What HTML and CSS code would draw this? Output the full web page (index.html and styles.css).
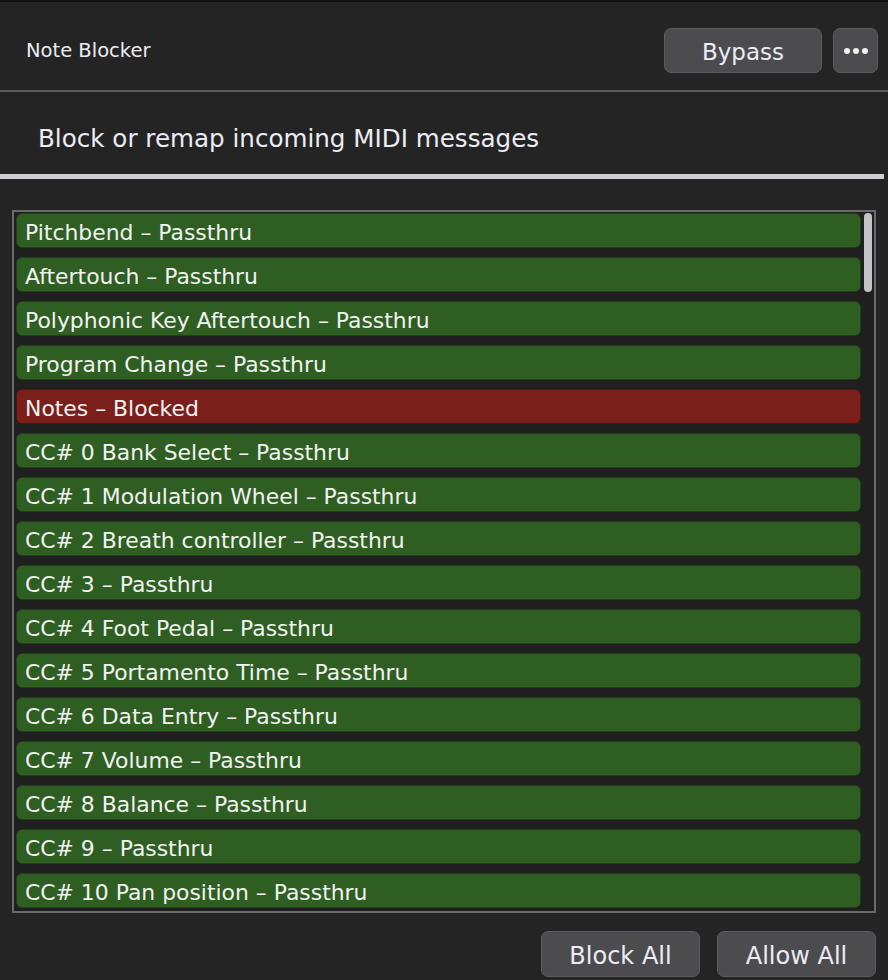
FILE: index.html
```html
<!DOCTYPE html>
<html>
<head>
<meta charset="utf-8">
<link rel="stylesheet" href="styles.css">
</head>
<body>
<div class="app">
  <header class="header">
    <div class="title">Note Blocker</div>
    <div class="header-actions">
      <button class="btn btn-bypass">Bypass</button>
      <button class="btn btn-more"><span class="dot"></span><span class="dot"></span><span class="dot"></span></button>
    </div>
  </header>
  <div class="rule-dark"></div>
  <div class="subtitle">Block or remap incoming MIDI messages</div>
  <div class="rule-light"></div>
  <div class="list-box">
    <div class="list">
      <div class="row pass">Pitchbend – Passthru</div>
      <div class="row pass">Aftertouch – Passthru</div>
      <div class="row pass">Polyphonic Key Aftertouch – Passthru</div>
      <div class="row pass">Program Change – Passthru</div>
      <div class="row block">Notes – Blocked</div>
      <div class="row pass">CC# 0 Bank Select – Passthru</div>
      <div class="row pass">CC# 1 Modulation Wheel – Passthru</div>
      <div class="row pass">CC# 2 Breath controller – Passthru</div>
      <div class="row pass">CC# 3 – Passthru</div>
      <div class="row pass">CC# 4 Foot Pedal – Passthru</div>
      <div class="row pass">CC# 5 Portamento Time – Passthru</div>
      <div class="row pass">CC# 6 Data Entry – Passthru</div>
      <div class="row pass">CC# 7 Volume – Passthru</div>
      <div class="row pass">CC# 8 Balance – Passthru</div>
      <div class="row pass">CC# 9 – Passthru</div>
      <div class="row pass">CC# 10 Pan position – Passthru</div>
    </div>
    <div class="scrollbar"><div class="thumb"></div></div>
  </div>
  <footer class="footer">
    <button class="btn btn-foot">Block All</button>
    <button class="btn btn-foot">Allow All</button>
  </footer>
</div>
</body>
</html>
```

FILE: styles.css
```css
html, body {
  margin: 0;
  padding: 0;
  background: #232323;
}
body {
  width: 888px;
  height: 980px;
  overflow: hidden;
  font-family: "DejaVu Sans", "Liberation Sans", sans-serif;
  color: #ececf2;
}
.app {
  border-top: 2px solid #121212;
  height: 978px;
  display: flex;
  flex-direction: column;
  background: #242424;
}
.header {
  height: 88px;
  box-sizing: border-box;
  display: flex;
  align-items: flex-start;
  justify-content: space-between;
  padding: 26px 10px 0 26px;
}
.title {
  font-size: 19.5px;
  color: #ececf2;
  line-height: 45px;
}
.header-actions {
  display: flex;
  gap: 11px;
}
.btn {
  font-family: inherit;
  background: #4c4c4e;
  border: 1px solid #5c5c5e;
  border-radius: 7px;
  color: #ececf4;
  display: flex;
  align-items: center;
  justify-content: center;
  padding: 0;
  cursor: pointer;
}
.btn-bypass {
  width: 158px;
  height: 45px;
  font-size: 23px;
  padding-top: 3px;
}
.btn-more {
  width: 45px;
  height: 45px;
  gap: 3px;
}
.dot {
  width: 6px;
  height: 6px;
  border-radius: 50%;
  background: #f0f0f6;
}
.rule-dark {
  height: 2px;
  background: #5a5a5c;
}
.subtitle {
  height: 82px;
  box-sizing: border-box;
  display: flex;
  align-items: center;
  padding: 10px 0 0 38px;
  font-size: 24.6px;
  color: #ececf4;
}
.rule-light {
  height: 5px;
  width: 884px;
  background: #cfcfd6;
}
.list-box {
  margin: 31px 12px 0 12px;
  width: 860px;
  height: 699px;
  border: 2px solid #6a6a6a;
  display: flex;
  background: #1f1f1f;
}
.list {
  width: 845px;
  padding: 1px 0 0 2px;
  display: flex;
  flex-direction: column;
  gap: 9px;
  overflow: hidden;
}
.row {
  flex: 0 0 auto;
  height: 35px;
  border-radius: 6px;
  display: flex;
  align-items: center;
  padding: 3px 0 0 8px;
  font-size: 21.9px;
  color: #f2f2f2;
  white-space: nowrap;
  box-sizing: border-box;
}
.pass {
  background: #2f5e22;
  border: 1px solid #1f3f16;
}
.block {
  background: #7b1f1b;
  border: 1px solid #501512;
}
.scrollbar {
  width: 13px;
  box-sizing: border-box;
  padding: 1px 0 0 3px;
}
.thumb {
  width: 8px;
  height: 79px;
  border-radius: 4px;
  background: #c4c4c8;
}
.footer {
  display: flex;
  justify-content: flex-end;
  gap: 17px;
  padding: 18px 12px 0 0;
}
.btn-foot {
  width: 159px;
  height: 46px;
  font-size: 24px;
  padding-top: 3px;
}
```
